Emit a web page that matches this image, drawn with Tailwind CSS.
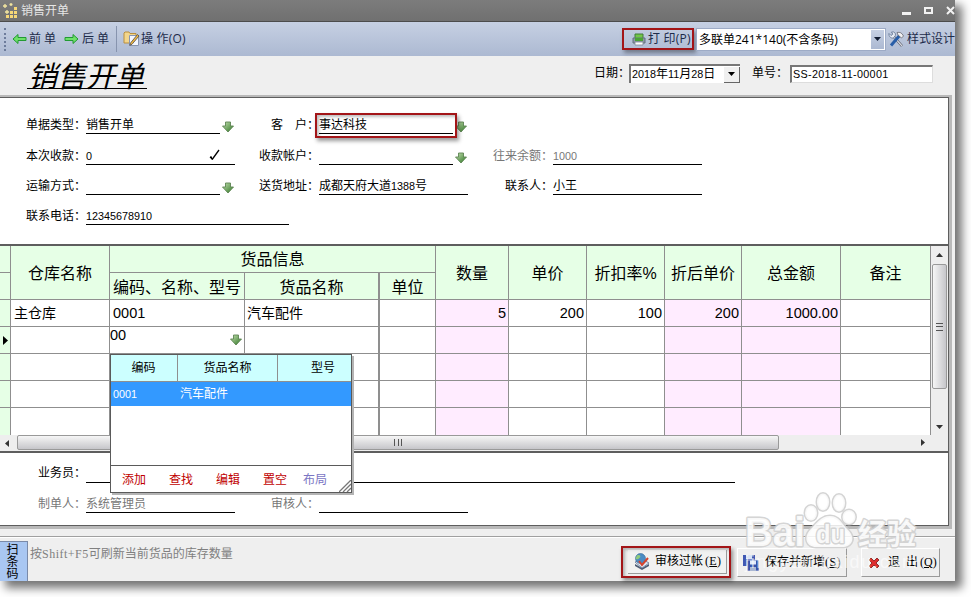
<!DOCTYPE html>
<html lang="zh-CN">
<head>
    <meta charset="UTF-8">
    <meta name="viewport" content="width=device-width, initial-scale=1.0">
    <title>销售开单</title>
    <script src="https://cdn.jsdelivr.net/npm/@tailwindcss/browser@4"></script>
</head>
<body class="relative w-[971px] h-[597px] overflow-hidden bg-white text-black text-[12px] leading-[13px] font-['Liberation_Serif','Noto_Sans_CJK_SC',serif]">
    <!-- Shared icons -->
    <svg class="absolute w-0 h-0">
        <defs>
            <linearGradient id="green" x1="0" y1="0" x2="1" y2="1">
                <stop offset="0" stop-color="#c4e0b0"/>
                <stop offset="1" stop-color="#2c7422"/>
            </linearGradient>
        </defs>
        <symbol id="down" viewBox="0 0 12 12">
            <path d="M3.500 1h5v4h3L6 11 .5 5h3z" fill="url(#green)" stroke="#5d8553" stroke-width=".9"/>
        </symbol>
    </svg>

    <div class="relative w-[955px] h-[581px] flex flex-col bg-[#efefef] shadow-[6px_6px_9px_1px_rgba(0,0,0,0.55)]">
        <!-- Title bar -->
        <div class="h-[22px] shrink-0 flex items-center bg-linear-to-b from-[#7c7c7c] to-[#707070] border-b border-[#4c4c4c] text-[#e6e6e6] font-['Noto_Sans_CJK_SC',sans-serif]">
            <svg class="ml-[2px] w-[16px] h-[16px]" viewBox="0 0 16 16">
                <path d="M3 1v4M1 3h4M9 0v3M7.500 1.500h3M5 7v4M3 9h4" stroke="#f3e6a0" stroke-width="1.300"/>
                <g fill="#f6d777">
                    <path d="M12 4h3v3h-3zM8 8h3v3H8zM12 8h3v3h-3zM4 12h3v3H4zM8 12h3v3H8zM12 12h3v3h-3z"/>
                </g>
            </svg>
            <span class="ml-[3px] -mt-[2px]">销售开单</span>
            <svg class="ml-auto -mr-px w-[56px] h-[14px]" viewBox="0 0 56 14">
                <path d="M2 8h9v3H2z" fill="#f2f2f2"/>
                <rect x="25" y="4" width="7" height="5" fill="none" stroke="#f2f2f2" stroke-width="2"/>
                <path d="M47 3l7 7M54 3l-7 7" stroke="#f2f2f2" stroke-width="2"/>
            </svg>
        </div>

        <!-- Toolbar -->
        <div class="h-[34px] shrink-0 flex items-center bg-linear-to-b from-[#c6d0e3] to-[#acb9d2] text-[#1d2b4a] font-['Open_Sans','Noto_Sans_CJK_SC',sans-serif] leading-[16px] whitespace-pre">
            <div class="ml-[4px] h-[23px] border-l-2 border-dotted border-[#6d7c9b]"></div>
            <svg class="ml-[6px] w-[15px] h-[12px]" viewBox="0 0 15 12">
                <path d="M1 6l5-4.500v3h8v3H6v3z" fill="#6ee069" stroke="#229a32"/>
            </svg>
            <span class="w-[37px] pl-[2px]">前 单</span>
            <svg class="w-[15px] h-[12px]" viewBox="0 0 15 12">
                <path d="M14 6L9 1.500v3H1v3h8v3z" fill="#6ee069" stroke="#229a32"/>
            </svg>
            <span class="w-[37px] pl-[3px]">后 单</span>
            <div class="w-px h-[26px] bg-[#8794ae]"></div>
            <svg class="ml-[6px] w-[17px] h-[16px]" viewBox="0 0 17 16">
                <path d="M1 2l1-1h4l1 1.500h6V12H1z" fill="#f3d68c" stroke="#b98f3e"/>
                <path d="M6.500 4.500h9v10h-9z" fill="#f3f7ff" stroke="#8795b0"/>
                <path d="M14.500 3.500l-7 8.500-.7 2.300 2.200-1L16 5z" fill="#f0b83f" stroke="#4d4a4a" stroke-width=".8"/>
            </svg>
            <span class="ml-px tracking-[0.2px]">操 作(O)</span>
            <div class="ml-auto w-[72px] h-[22px] flex items-center border-2 border-[#a31518] pl-[8px] shadow-[2px_3px_4px_rgba(0,0,0,0.35)]">
                <svg class="w-[14px] h-[13px] shrink-0" viewBox="0 0 14 13">
                    <path d="M3 1h8v5H3z" fill="#71c747" stroke="#437d3a"/>
                    <path d="M1 5h12v5H1z" fill="#8c98a5" stroke="#647080"/>
                    <path d="M3 5h8v3H3z" fill="#4aa434"/>
                    <path d="M3 9h8v3H3z" fill="#fff" stroke="#7e8994" stroke-width=".8"/>
                </svg>
                <span class="ml-[2px] tracking-[0.2px]">打 印(P)</span>
            </div>
            <div class="ml-[2px] w-[190px] h-[23px] shrink-0 flex bg-white border border-[#9dabc6] text-black">
                <span class="grow pl-[2px] leading-[21px]">多联单241*140(不含条码)</span>
                <div class="w-[13px] flex items-center justify-center bg-linear-to-b from-[#c6d0e3] to-[#acb9d2] m-px">
                    <svg class="w-[7px] h-[4px]" viewBox="0 0 7 4"><path d="M0 0h7L3.500 4z" fill="#111c33"/></svg>
                </div>
            </div>
            <svg class="ml-[2px] w-[17px] h-[17px] shrink-0" viewBox="0 0 17 17">
                <path d="M6 6l8 9" stroke="#4e4e58" stroke-width="2.500"/>
                <path d="M6 6l8 9" stroke="#d7dbe4" stroke-width="1.200"/>
                <path d="M1 2.500l2 2 1.800-1.300L3.500 1c3-.8 4.500 1.500 3.800 3.500L5.500 7C3 7.500.5 5.500 1 2.500z" fill="#e8edf5" stroke="#5c6f8e" stroke-width=".8"/>
                <path d="M12 4L3 14.500" stroke="#285ea8" stroke-width="3"/>
                <path d="M9 1.500c3-.8 5 .5 6.500 3.500l-2 2L10 4z" fill="#f2f2f4" stroke="#66666e" stroke-width=".8"/>
            </svg>
            <span class="w-[50px] pl-[2px] shrink-0">样式设计</span>
        </div>

        <!-- Form header -->
        <div class="h-[39px] shrink-0 flex items-start whitespace-nowrap">
            <h1 class="ml-[27px] mt-[5px] w-[120px] h-[28px] pl-px border-b border-black text-[29px] leading-[27px] italic font-normal font-['Noto_Sans_CJK_SC',sans-serif]">销售开单</h1>
            <div class="ml-[447px] mt-[8px] flex items-center">
                <label class="w-[35px] shrink-0">日期：</label>
                <div class="w-[111px] h-[19px] shrink-0 flex items-center bg-white border-t-2 border-l-2 border-[#777] pl-px">
                    <span class="grow"><span class="text-[10.8px] font-['Liberation_Sans']">2018</span>年<span class="text-[10.8px] font-['Liberation_Sans']">11</span>月<span class="text-[10.8px] font-['Liberation_Sans']">28</span>日</span>
                    <div class="w-[16px] h-[16px] flex items-center justify-center bg-[#f0f0f0] border-r border-b border-[#666]">
                        <svg class="w-[7px] h-[4px]" viewBox="0 0 7 4"><path d="M0 0h7L3.500 4z"/></svg>
                    </div>
                </div>
                <label class="ml-[12px] w-[38px] shrink-0">单号：</label>
                <div class="w-[143px] h-[18px] shrink-0 bg-white border-t-2 border-l-2 border-t-[#777] border-l-[#777] border-r border-b border-r-[#ddd] border-b-[#ddd] pl-px text-[10.8px] leading-[15px] tracking-[0.32px] font-['Liberation_Sans']">SS-2018-11-00001</div>
            </div>
        </div>

        <!-- Document -->
        <div class="w-[952px] h-[434px] shrink-0 border-t-2 border-r-3 border-b-3 border-[#b9b9b9]">
            <div class="h-full flex flex-col bg-white border-t border-r border-b border-[#5e5e5e]">
                <!-- Fields -->
                <div class="h-[146px] shrink-0 pt-[20px] pl-[26px] grid grid-cols-[233px_234px_240px] grid-rows-[31px_30px_30px_16px] leading-[14px] whitespace-nowrap">
                    <div class="flex h-[16px]">
                        <label class="w-[60px]">单据类型：</label>
                        <div class="w-[134px] border-b border-black">销售开单</div>
                        <svg class="ml-[2px] mt-[3px] w-[12px] h-[12px]"><use href="#down"/></svg>
                    </div>
                    <div class="flex h-[16px]">
                        <label class="w-[60px] pl-[12px]">客　户：</label>
                        <div class="relative w-[134px] border-b border-black">事达科技
                            <div class="absolute -left-[4px] -top-[5px] w-[142px] h-[25px] border-2 border-[#a31518] shadow-[2px_3px_4px_rgba(0,0,0,0.4),inset_2px_2px_3px_rgba(0,0,0,0.25)]"></div>
                        </div>
                        <svg class="ml-[2px] mt-[3px] w-[12px] h-[12px]"><use href="#down"/></svg>
                    </div>
                    <div></div>

                    <div class="flex h-[16px]">
                        <label class="w-[60px]">本次收款：</label>
                        <div class="w-[149px] flex justify-between border-b border-black">
                            <span class="text-[10.8px] leading-[15px] font-['Liberation_Sans']">0</span>
                            <svg class="mr-[15px] w-[11px] h-[12px]" viewBox="0 0 11 12">
                                <path d="M1 8l2.500 2L10 1" fill="none" stroke="#000" stroke-width="1.300"/>
                                <path d="M1 7.500h2v1.500l1 1.500H2.500z"/>
                            </svg>
                        </div>
                    </div>
                    <div class="flex h-[16px]">
                        <label class="w-[60px]">收款帐户：</label>
                        <div class="w-[134px] border-b border-black"></div>
                        <svg class="ml-[2px] mt-[3px] w-[12px] h-[12px]"><use href="#down"/></svg>
                    </div>
                    <div class="flex h-[16px] text-[#777]">
                        <label class="w-[60px]">往来余额：</label>
                        <div class="w-[149px] border-b border-black text-[10.8px] leading-[15px] font-['Liberation_Sans']">1000</div>
                    </div>

                    <div class="flex h-[16px]">
                        <label class="w-[60px]">运输方式：</label>
                        <div class="w-[134px] border-b border-black"></div>
                        <svg class="ml-[2px] mt-[3px] w-[12px] h-[12px]"><use href="#down"/></svg>
                    </div>
                    <div class="flex h-[16px]">
                        <label class="w-[60px]">送货地址：</label>
                        <div class="w-[149px] border-b border-black">成都天府大道<span class="text-[10.8px] font-['Liberation_Sans']">1388</span>号</div>
                    </div>
                    <div class="flex h-[16px]">
                        <label class="w-[60px] pl-[12px]">联系人：</label>
                        <div class="w-[149px] border-b border-black">小王</div>
                    </div>

                    <div class="flex h-[16px]">
                        <label class="w-[60px] shrink-0">联系电话：</label>
                        <div class="w-[203px] shrink-0 border-b border-black text-[10.8px] leading-[15px] font-['Liberation_Sans']">12345678910</div>
                    </div>
                </div>

                <!-- Goods grid -->
                <div class="h-[191px] shrink-0 flex border-t-2 border-[#5e5e5e]">
                    <div class="relative w-[931px] shrink-0 grid grid-cols-[11px_99px_135px_135px_56px_73px_78px_78px_77px_99px_90px] grid-rows-[repeat(7,27px)] text-[14.5px] leading-[26px] font-['Liberation_Sans','Noto_Sans_CJK_SC',sans-serif] whitespace-nowrap *:border-r *:border-b *:border-[#8f8f8f]">
                        <div class="bg-[#e6ffe6]"></div>
                        <div class="row-span-2 bg-[#e6ffe6] text-center text-[16px] leading-[55px]">仓库名称</div>
                        <div class="col-span-3 bg-[#e6ffe6] text-center text-[16px] leading-[28px]">货品信息</div>
                        <div class="row-span-2 bg-[#e6ffe6] text-center text-[16px] leading-[55px]">数量</div>
                        <div class="row-span-2 bg-[#e6ffe6] text-center text-[16px] leading-[55px]">单价</div>
                        <div class="row-span-2 bg-[#e6ffe6] text-center text-[16px] leading-[55px]">折扣率%</div>
                        <div class="row-span-2 bg-[#e6ffe6] text-center text-[16px] leading-[55px]">折后单价</div>
                        <div class="row-span-2 bg-[#e6ffe6] text-center text-[16px] leading-[55px]">总金额</div>
                        <div class="row-span-2 bg-[#e6ffe6] text-center text-[16px] leading-[55px]">备注</div>
                        <div class="bg-[#e6ffe6]"></div>
                        <div class="bg-[#e6ffe6] text-center text-[16px] leading-[29px]">编码、名称、型号</div>
                        <div class="bg-[#e6ffe6] text-center text-[16px] leading-[29px] border-r-2!">货品名称</div>
                        <div class="bg-[#e6ffe6] text-center text-[16px] leading-[29px]">单位</div>

                        <div class="bg-[#e6ffe6]"></div>
                        <div class="pl-[3px] text-[14px]">主仓库</div>
                        <div class="pl-[3px]">0001</div>
                        <div class="pl-[2px] text-[14px] border-r-2!">汽车配件</div>
                        <div></div>
                        <div class="pr-[2px] bg-[#ffecff] text-right">5</div>
                        <div class="pr-[2px] text-right">200</div>
                        <div class="pr-[2px] text-right">100</div>
                        <div class="pr-[2px] bg-[#ffecff] text-right">200</div>
                        <div class="pr-[2px] bg-[#ffecff] text-right">1000.00</div>
                        <div></div>

                        <div class="flex items-center bg-[#e6ffe6]">
                            <svg class="ml-[3px] w-[5px] h-[9px]" viewBox="0 0 5 9"><path d="M0 0v9l5-4.500z"/></svg>
                        </div>
                        <div></div>
                        <div class="flex justify-between leading-[17px]">00
                            <svg class="mr-[2px] mt-[7px] w-[12px] h-[12px]"><use href="#down"/></svg>
                        </div>
                        <div class="border-r-2!"></div>
                        <div></div>
                        <div class="bg-[#ffecff]"></div>
                        <div></div>
                        <div></div>
                        <div class="bg-[#ffecff]"></div>
                        <div class="bg-[#ffecff]"></div>
                        <div></div>

                        <div class="bg-[#e6ffe6]"></div>
                        <div></div>
                        <div></div>
                        <div class="border-r-2!"></div>
                        <div></div>
                        <div class="bg-[#ffecff]"></div>
                        <div></div>
                        <div></div>
                        <div class="bg-[#ffecff]"></div>
                        <div class="bg-[#ffecff]"></div>
                        <div></div>

                        <div class="bg-[#e6ffe6]"></div>
                        <div></div>
                        <div></div>
                        <div class="border-r-2!"></div>
                        <div></div>
                        <div class="bg-[#ffecff]"></div>
                        <div></div>
                        <div></div>
                        <div class="bg-[#ffecff]"></div>
                        <div class="bg-[#ffecff]"></div>
                        <div></div>

                        <div class="bg-[#e6ffe6] border-b-0!"></div>
                        <div class="border-b-0!"></div>
                        <div class="border-b-0!"></div>
                        <div class="border-r-2! border-b-0!"></div>
                        <div class="border-b-0!"></div>
                        <div class="bg-[#ffecff] border-b-0!"></div>
                        <div class="border-b-0!"></div>
                        <div class="border-b-0!"></div>
                        <div class="bg-[#ffecff] border-b-0!"></div>
                        <div class="bg-[#ffecff] border-b-0!"></div>
                        <div class="border-b-0!"></div>

                        <!-- Goods lookup -->
                        <div class="absolute left-[110px] top-[108px] w-[242px] h-[139px] flex flex-col bg-white border! border-[#5a5a5a]! shadow-[2px_2px_0_#b4b4b4] text-[12px] font-['Liberation_Serif','Noto_Sans_CJK_SC',serif]">
                            <div class="h-[27px] shrink-0 flex bg-[#ccffff] border-b border-[#8f8f8f] text-center leading-[27px]">
                                <div class="w-[67px] pr-px border-r border-[#8f8f8f]">编码</div>
                                <div class="w-[100px] border-r border-[#8f8f8f]">货品名称</div>
                                <div class="grow pl-[17px]">型号</div>
                            </div>
                            <div class="h-[24px] shrink-0 flex bg-[#3399ff] text-white leading-[25px]">
                                <div class="w-[67px] pl-[2px] text-[10.8px] font-['Liberation_Sans']">0001</div>
                                <div class="pl-[2px]">汽车配件</div>
                            </div>
                            <div class="grow border-b border-[#5a5a5a]"></div>
                            <div class="relative h-[26px] shrink-0 flex pl-[11px] gap-[23px] text-[#c00000] leading-[29px]">
                                <span>添加</span>
                                <span>查找</span>
                                <span>编辑</span>
                                <span>置空</span>
                                <span class="-ml-[7px] text-[#7b76c4]">布局</span>
                                <svg class="absolute right-0 bottom-0 w-[12px] h-[12px]" viewBox="0 0 12 12">
                                    <path d="M0 12L12 0M4 12l8-8M8 12l4-4" stroke="#777" stroke-width="1.300"/>
                                </svg>
                            </div>
                        </div>
                    </div>
                    <!-- Vertical scrollbar -->
                    <div class="grow flex flex-col items-center bg-[#eeeeee]">
                        <svg class="mt-[7px] w-[7px] h-[4px] shrink-0" viewBox="0 0 7 4"><path d="M0 4h7L3.500 0z" fill="#333"/></svg>
                        <div class="mt-[7px] w-[15px] h-[125px] shrink-0 flex items-center justify-center bg-linear-to-r from-[#f6f6f6] to-[#c6c6ca] border border-[#999] rounded-[2px]">
                            <div class="w-[7px] h-[8px] flex flex-col justify-between *:h-px *:bg-[#555]"><i></i><i></i><i></i></div>
                        </div>
                        <svg class="mt-auto mb-[6px] w-[7px] h-[4px] shrink-0" viewBox="0 0 7 4"><path d="M0 0h7L3.500 4z" fill="#333"/></svg>
                    </div>
                </div>
                <!-- Horizontal scrollbar -->
                <div class="h-[18px] shrink-0 flex items-center bg-[#eeeeee] border-b-2 border-[#5e5e5e]">
                    <svg class="ml-[5px] w-[4px] h-[7px]" viewBox="0 0 4 7"><path d="M4 0v7L0 3.500z" fill="#333"/></svg>
                    <div class="ml-[8px] -mt-px w-[762px] h-[15px] flex items-center justify-center bg-linear-to-b from-[#f6f6f6] to-[#c6c6ca] border border-[#999] rounded-[2px]">
                        <div class="w-[8px] h-[7px] flex justify-between *:w-px *:bg-[#555]"><i></i><i></i><i></i></div>
                    </div>
                    <svg class="ml-auto mr-[23px] -mt-px w-[4px] h-[7px]" viewBox="0 0 4 7"><path d="M0 0v7l4-3.500z" fill="#333"/></svg>
                </div>

                <!-- Signatures -->
                <div class="grow pt-[13px] pl-[38px] leading-[14px]">
                    <div class="flex h-[17px]">
                        <label class="w-[48px]">业务员：</label>
                        <div class="w-[649px] border-b border-black"></div>
                    </div>
                    <div class="mt-[14px] flex h-[16px] text-[#777]">
                        <label class="w-[48px]">制单人：</label>
                        <div class="w-[149px] border-b border-black">系统管理员</div>
                        <label class="ml-[36px] w-[48px]">审核人：</label>
                        <div class="w-[149px] border-b border-black"></div>
                    </div>
                </div>
            </div>
        </div>

        <!-- Bottom bar -->
        <div class="mt-[7px] grow flex items-start border-t border-[#a0a0a0] shadow-[inset_0_1px_0_#fff]">
            <div class="mt-[4px] w-[28px] h-[40px] pt-[2px] pr-[2px] flex justify-center bg-[#a9c7f2] border-t border-r border-[#7a8aa8] text-center">
                <div class="w-[12px] leading-[12px]">扫条码</div>
            </div>
            <div class="ml-[2px] mt-[11px] text-[#808080]">按<span class="tracking-[0.5px]">Shift+F5</span>可刷新当前货品的库存数量</div>
            <div class="ml-auto mr-[15px] mt-[9px] flex items-start whitespace-pre">
                <div class="w-[110px] h-[32px] flex border-2 border-[#a31518] p-[2px] pl-[5px] shadow-[2px_3px_4px_rgba(0,0,0,0.4),inset_2px_2px_3px_rgba(0,0,0,0.25)]">
                    <button class="grow flex items-center pl-[5px] border-r border-b border-[#9a9a9a] bg-[#f1f1f1]/60">
                        <svg class="w-[18px] h-[17px] shrink-0" viewBox="0 0 18 17">
                            <path d="M2 11l7 4 7-4v2l-7 4-7-4z" fill="#4d5d75"/>
                            <path d="M2 9l7-3 7 4-7 5z" fill="#dce5f1" stroke="#5f7597" stroke-width=".8"/>
                            <circle cx="7.500" cy="5.500" r="5" fill="#4b8bc4" stroke="#386896" stroke-width=".6"/>
                            <path d="M4 2.500c3-1.500 4 1 3 2s-3 3-4.500 1z" fill="#8fcb7c"/>
                            <path d="M6 8l3 4 6-7" fill="none" stroke="#d5432d" stroke-width="2"/>
                        </svg>
                        <span class="ml-[4px]">审核过帐<span class="ml-[2px] tracking-[0.3px]">(<u>E</u>)</span></span>
                    </button>
                </div>
                <button class="ml-[6px] mt-[2px] w-[110px] h-[29px] flex items-center pl-[5px] border border-t-white border-l-white border-r-[#9a9a9a] border-b-[#9a9a9a]">
                    <svg class="w-[16px] h-[16px]" viewBox="0 0 16 16">
                        <path d="M0 0h12v11H0z" fill="#4058b2"/>
                        <path d="M3 0h6v4H3z" fill="#d9e3f5"/>
                        <path d="M4 5h12v11H4z" fill="#3854aa" stroke="#e8ecf6" stroke-width=".7"/>
                        <path d="M7 5.500h6v4H7z" fill="#e1ebfa"/>
                        <path d="M7 12h6v4H7z" fill="#aab7d2"/>
                    </svg>
                    <span class="ml-[6px]">保存并新增<span class="tracking-[0.5px]">(<u>S</u>)</span></span>
                </button>
                <button class="ml-[14px] mt-[2px] w-[79px] h-[29px] flex items-center pl-[6px] border border-t-white border-l-white border-r-[#9a9a9a] border-b-[#9a9a9a]">
                    <svg class="w-[12px] h-[12px]" viewBox="0 0 12 12">
                        <path d="M1 3l2-2 3 3 3-3 2 2-3 3 3 3-2 2-3-3-3 3-2-2 3-3z" fill="#dd2e2e" stroke="#7c1414" stroke-width=".8"/>
                    </svg>
                    <span class="ml-[8px]">退  出<span class="ml-[2px]">(<u>Q</u>)</span></span>
                </button>
            </div>
        </div>
    </div>

    <!-- Watermark -->
    <svg class="absolute left-[740px] top-[485px] w-[185px] h-[95px]" viewBox="0 0 185 95" font-family="Liberation Sans, Noto Sans CJK SC, sans-serif" font-weight="bold">
        <g fill="#fff" fill-opacity=".85" stroke="#cfcfcf" stroke-opacity=".9" stroke-width="3" stroke-linejoin="round" paint-order="stroke">
            <text x="5" y="61" font-size="40" textLength="60" lengthAdjust="spacingAndGlyphs">Bai</text>
            <ellipse cx="71" cy="28" rx="6" ry="7.500"/>
            <ellipse cx="83" cy="17" rx="6" ry="8.500"/>
            <ellipse cx="99" cy="18" rx="6" ry="8.500"/>
            <ellipse cx="109" cy="32" rx="6.500" ry="7"/>
            <path d="M90 31c9 0 12 8 18 14 8 8 4 16-4 17H76c-9 0-13-9-6-17 6-6 11-14 20-14z"/>
            <text x="76" y="58" font-size="25" textLength="29" lengthAdjust="spacingAndGlyphs">du</text>
            <text x="118" y="60" font-size="29">经验</text>
        </g>
        <text x="5" y="83" font-size="18" font-weight="normal" fill="#fff" fill-opacity=".6" textLength="172">jingyan.baidu.com</text>
    </svg>
</body>
</html>
